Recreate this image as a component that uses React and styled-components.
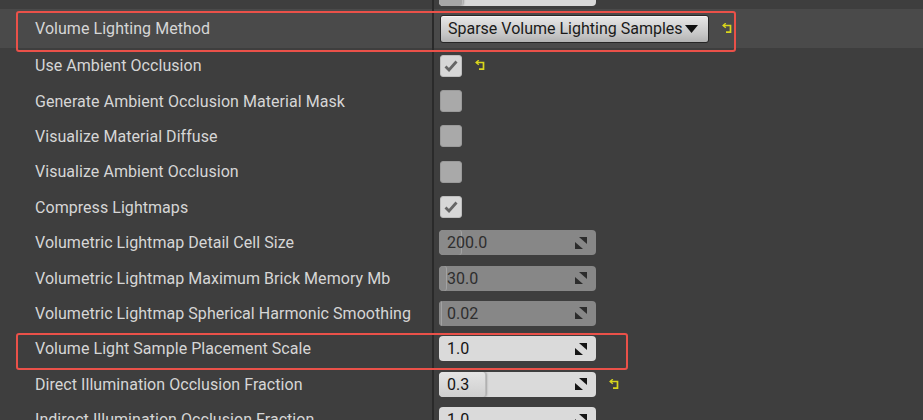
import React from 'react';
import styled, { createGlobalStyle } from 'styled-components';

const GlobalStyle = createGlobalStyle`
  html, body {
    margin: 0;
    padding: 0;
    background: #3e3e3e;
    overflow: hidden;
  }
  * { box-sizing: border-box; }
`;

const rows = [
  { label: 'Volume Lighting Method', kind: 'dropdown', value: 'Sparse Volume Lighting Samples', reset: true, highlight: true },
  { label: 'Use Ambient Occlusion', kind: 'check', checked: true, reset: true },
  { label: 'Generate Ambient Occlusion Material Mask', kind: 'check' },
  { label: 'Visualize Material Diffuse', kind: 'check' },
  { label: 'Visualize Ambient Occlusion', kind: 'check' },
  { label: 'Compress Lightmaps', kind: 'check', checked: true },
  { label: 'Volumetric Lightmap Detail Cell Size', kind: 'number', value: '200.0', disabled: true, fill: 22 },
  { label: 'Volumetric Lightmap Maximum Brick Memory Mb', kind: 'number', value: '30.0', disabled: true, fill: 7 },
  { label: 'Volumetric Lightmap Spherical Harmonic Smoothing', kind: 'number', value: '0.02', disabled: true, fill: 2 },
  { label: 'Volume Light Sample Placement Scale', kind: 'number', value: '1.0', fill: 0 },
  { label: 'Direct Illumination Occlusion Fraction', kind: 'number', value: '0.3', fill: 46, reset: true },
  { label: 'Indirect Illumination Occlusion Fraction', kind: 'number', value: '1.0', fill: 0 },
];

const ResetIcon = () => (
  <svg width="11" height="11" viewBox="0 0 11 11">
    <path d="M1.5 2.5 H8.5 V9.2 H4" fill="none" stroke="#d9d61c" strokeWidth="1.7" />
    <path d="M3.8 0.3 L1.2 2.5 L3.8 4.7" fill="none" stroke="#d9d61c" strokeWidth="1.5" />
  </svg>
);

const SpinIcon = ({ color }) => (
  <svg width="12" height="12" viewBox="0 0 12 12">
    <polygon points="4,0 12,0 12,7" fill={color} />
    <polygon points="0,5 0,12 8,12" fill={color} />
  </svg>
);

const CheckMark = () => (
  <svg width="14" height="12" viewBox="0 0 14 12">
    <path d="M1.5 6.5 L5 10 L12.5 1.5" fill="none" stroke="#666" strokeWidth="2.8" />
  </svg>
);

const Value = ({ row }) => {
  if (row.kind === 'dropdown') {
    return (
      <Dropdown>
        <span>{row.value}</span>
        <svg width="13" height="8" viewBox="0 0 13 8">
          <polygon points="0,0 13,0 6.5,8" fill="#111" />
        </svg>
      </Dropdown>
    );
  }
  if (row.kind === 'check') {
    return <CheckBox $checked={row.checked}>{row.checked && <CheckMark />}</CheckBox>;
  }
  return (
    <NumberField $disabled={row.disabled}>
      {row.fill > 0 && <Fill $disabled={row.disabled} style={{ width: row.fill }} />}
      <FieldText $disabled={row.disabled}>{row.value}</FieldText>
      <SpinSlot>
        <SpinIcon color={row.disabled ? '#2c2c2c' : '#151515'} />
      </SpinSlot>
    </NumberField>
  );
};

const App = () => {
  return (
    <Panel>
      <GlobalStyle />
      <TopRow>
        <LabelCell />
        <ValueCell>
          <TopField>
            <Fill $top style={{ width: 23 }} />
          </TopField>
        </ValueCell>
      </TopRow>
      {rows.map((row) => (
        <Row key={row.label} $highlight={row.highlight}>
          <LabelCell>{row.label}</LabelCell>
          <ValueCell>
            <Value row={row} />
            {row.reset && <ResetSlot><ResetIcon /></ResetSlot>}
          </ValueCell>
        </Row>
      ))}
      <Callout $top={11} $width={720} $height={41} />
      <Callout $top={333} $width={612} $height={37} />
    </Panel>
  );
};

export default App;

const Panel = styled.div`
  position: relative;
  width: 923px;
  height: 420px;
  overflow: hidden;
  background: #3e3e3e;
  font-family: Roboto, 'Liberation Sans', sans-serif;
`;

const Row = styled.div`
  display: grid;
  grid-template-columns: 432px 1fr;
  height: ${(p) => (p.$highlight ? '39px' : '35.4px')};
  background: ${(p) => (p.$highlight ? '#4a4a4a' : 'transparent')};
  flex-shrink: 0;
`;

const TopRow = styled(Row)`
  height: 9px;
  overflow: hidden;
`;

const LabelCell = styled.div`
  display: flex;
  align-items: center;
  padding-left: 35px;
  color: #d6d6d6;
  font-size: 16px;
  letter-spacing: 0.05px;
  white-space: nowrap;
`;

const ValueCell = styled.div`
  display: flex;
  align-items: center;
  padding-left: 5px;
  border-left: 2px solid #2a2a2a;
`;

const Dropdown = styled.div`
  display: flex;
  align-items: center;
  justify-content: space-between;
  width: 269px;
  height: 28px;
  margin-left: 1px;
  padding: 0 10px 0 7px;
  border: 1px solid #262626;
  border-radius: 3px;
  background: linear-gradient(#e8e8e8, #c6c6c6 70%, #b2b2b2);
  box-shadow: inset 0 1px 0 #f4f4f4;
  color: #1a1a1a;
  font-size: 16px;
  white-space: nowrap;
`;

const CheckBox = styled.div`
  display: flex;
  align-items: center;
  justify-content: center;
  width: 22px;
  height: 22px;
  margin-left: 1px;
  border-radius: 3px;
  border: 1px solid ${(p) => (p.$checked ? '#bdbdbd' : '#9a9a9a')};
  background: ${(p) => (p.$checked ? '#d7d7d7' : '#a9a9a9')};
`;

const NumberField = styled.div`
  position: relative;
  display: flex;
  align-items: center;
  width: 157px;
  height: 25px;
  border-radius: 4px;
  overflow: hidden;
  background: ${(p) => (p.$disabled ? '#878787' : '#dadada')};
`;

const TopField = styled(NumberField)`
  height: 13px;
  margin-top: -10px;
  background: #d8d8d8;
`;

const Fill = styled.div`
  position: absolute;
  left: 0;
  top: 0;
  bottom: 0;
  background: ${(p) =>
    p.$top ? '#a6a6a6' : p.$disabled ? '#8a8a8a' : 'linear-gradient(#e4e4e4, #cfcfcf)'};
  box-shadow: ${(p) =>
    p.$disabled ? '1px 0 0 #a2a2a2' : '1px 0 0 #bdbdbd, 2px 0 2px rgba(0,0,0,0.25)'};
  border-radius: 4px 3px 3px 4px;
`;

const FieldText = styled.span`
  position: relative;
  padding-left: 8px;
  font-size: 16px;
  color: ${(p) => (p.$disabled ? '#2e2e2e' : '#141414')};
`;

const SpinSlot = styled.span`
  position: relative;
  display: flex;
  margin-left: auto;
  margin-right: 9px;
`;

const ResetSlot = styled.span`
  display: flex;
  margin-left: 13px;
`;

const Callout = styled.div`
  position: absolute;
  left: 16px;
  top: ${(p) => p.$top}px;
  width: ${(p) => p.$width}px;
  height: ${(p) => p.$height}px;
  border: 2px solid #ea5149;
  border-radius: 3px;
  pointer-events: none;
`;
